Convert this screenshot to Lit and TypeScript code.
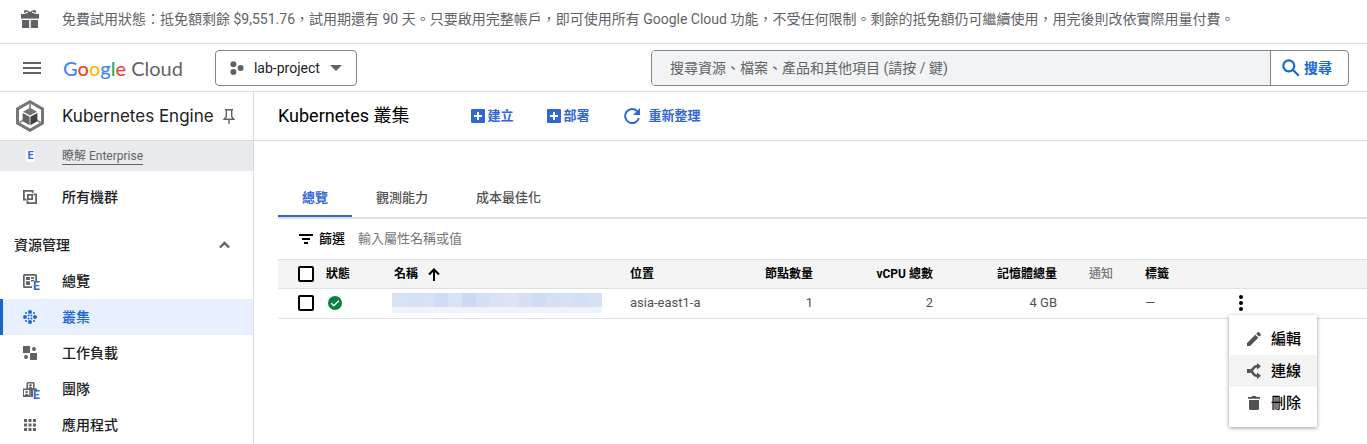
import { LitElement, html, css, svg, nothing } from "lit";
import type { TemplateResult } from "lit";
import { customElement, state } from "lit/decorators.js";
import { classMap } from "lit/directives/class-map.js";

interface NavItem {
  label: string;
  icon: string;
  badge?: boolean;
}

const icons: Record<string, TemplateResult> = {
  gift: svg`<g fill="#5f6368"><path d="M0 4h18v4.600H0z"/><path d="M1 10h7.200v8H1zM9.800 10H17v8H9.800z"/><path d="M3 .5C5 0 7 .4 8 1.400h2C11 .4 13 0 15 .5V2.500L12.500 4h-7L3 2.500z"/></g><path d="M4.500 2.400h2.500M11 2.400h2.500" stroke="#fff" stroke-width="1"/>`,
  menu: svg`<path d="M0 1h18M0 6h18M0 11h18" stroke="#5f6368" stroke-width="2"/>`,
  project: svg`<g fill="#5f6368"><circle cx="3.400" cy="3.200" r="3"/><circle cx="10.600" cy="7" r="3"/><circle cx="3.400" cy="10.900" r="3"/></g>`,
  caret: svg`<path d="M0 0h12L6 6z" fill="#5f6368"/>`,
  search: svg`<g fill="none" stroke="#1967d2" stroke-width="2.200"><circle cx="6.800" cy="6.800" r="5.500"/><path d="M10.800 10.800l6 6"/></g>`,
  gke: svg`<path d="M14 1.700L26.500 8.900v14.200L14 30.300 1.500 23.100V8.900z" fill="none" stroke="#757575" stroke-width="3"/><path d="M14 3v6M3.500 22.500l5-3M24.500 22.500l-5-3" stroke="#8a8a8a" stroke-width="1.800"/><path d="M14 7.800l7 3.900-7 3.900-7-3.900z" fill="#757575"/><path d="M6.600 12.900l7 3.900v8.400l-7-4z" fill="#616161"/><path d="M21.400 12.900l-7 3.900v8.400l7-4z" fill="#424242"/>`,
  pin: svg`<g fill="none" stroke="#5f6368" stroke-width="1.400"><path d="M2 .8h8M3.300.8v7L1.200 10.200h9.600L8.700 7.800v-7M6 10v5"/></g>`,
  fleet: svg`<g fill="none" stroke="#5f6368" stroke-width="1.800"><path d="M3.500 9.600H.9V.9h8.700v2M10.500 4.400h2.600v8.700H4.400v-2.500"/><path d="M4.800 4.800h4.400v4.400H4.800z"/></g>`,
  overview: svg`<path d="M14 7V1.500Q14 0 12.500 0h-11Q0 0 0 1.500v11Q0 14 1.500 14H9v-1.700H1.700V1.700h10.600V7z" fill="#5f6368"/><path d="M3 3h4v3H3zM8 3h3.200v1.800H8zM3 7.200h4v3.800H3zM8 6h3.200v1.500H8z" fill="#5f6368"/>`,
  clusters: svg`<g fill="#1967d2"><circle cx="7" cy="2" r="2"/><circle cx="7" cy="12" r="2"/><circle cx="2" cy="7" r="2"/><circle cx="12" cy="7" r="2"/><circle cx="5.600" cy="5.600" r="1"/><circle cx="8.400" cy="5.600" r="1"/><circle cx="5.600" cy="8.400" r="1"/><circle cx="8.400" cy="8.400" r="1"/><circle cx="3" cy="3" r="1"/><circle cx="11" cy="3" r="1"/><circle cx="3" cy="11" r="1"/><circle cx="11" cy="11" r="1"/></g>`,
  workloads: svg`<g fill="#5f6368"><path d="M0 0h7v7H0zM7 7h7v7H7z"/><circle cx="11" cy="3" r="2"/><circle cx="3" cy="11" r="2"/></g>`,
  teams: svg`<g fill="none" stroke="#5f6368" stroke-width="1.500"><path d="M4.200 7V1.500Q4.200.8 5 .8h5q.8 0 .8.700V7M-.2 7.200h14.400M.2 7v7.200h6.800V7"/></g><g fill="#5f6368"><circle cx="7.500" cy="3.200" r="1.200"/><path d="M5 7q2.500-4.500 5 0z"/><circle cx="3.600" cy="10" r="1.200"/><path d="M1 14q2.600-4.500 5.200 0zM8 7h2v8H8z"/></g>`,
  apps: svg`<path d="M1 1h3v3H1zM5.500 1h3v3h-3zM10 1h3v3h-3zM1 5.500h3v3H1zM5.500 5.500h3v3h-3zM10 5.500h3v3h-3zM1 10h3v3H1zM5.500 10h3v3h-3zM10 10h3v3h-3z" fill="#5f6368"/>`,
  collapse: svg`<path d="M1 6.500l4.500-4.500L10 6.500" fill="none" stroke="#5f6368" stroke-width="2.400"/>`,
  add: svg`<rect width="14" height="14" rx="1" fill="#3367d6"/><path d="M7 3v8M3 7h8" stroke="#fff" stroke-width="2"/>`,
  refresh: svg`<path d="M13.200 3.200A7 7 0 1 0 14.900 10" fill="none" stroke="#3367d6" stroke-width="2"/><path d="M16 0v7H9z" fill="#3367d6"/>`,
  filter: svg`<path d="M0 1h14M3 5h8M5 9h4" stroke="#000" stroke-width="2"/>`,
  up: svg`<path d="M6 13V2M1 6.500l5-5 5 5" fill="none" stroke="#000" stroke-width="2"/>`,
  ok: svg`<circle cx="7" cy="7" r="7" fill="#0b8043"/><path d="M3.300 7.200l2.500 2.500 5-5" fill="none" stroke="#fff" stroke-width="1.500"/>`,
  more: svg`<circle cx="2" cy="2" r="2"/><circle cx="2" cy="8" r="2"/><circle cx="2" cy="14" r="2"/>`,
  edit: svg`<path d="M0 11v3h3l8.300-8.300-3-3zM13.700 3.300a.8.800 0 0 0 0-1.200L11.900.3a.8.800 0 0 0-1.200 0L9.200 1.800l3 3z" fill="#525252"/>`,
  connect: svg`<path d="M0 8h4M10.500 3.200H9.500Q8 3.200 6.800 4.800L4.300 8l2.500 3.200Q8 12.800 9.500 12.800h1" fill="none" stroke="#525252" stroke-width="2.600"/><path d="M0 6h3.500v4H0zM10 0l4 3.200-4 3.200zM10 9.600l4 3.200-4 3.200z" fill="#525252"/>`,
  remove: svg`<path d="M1 4h10v8.500Q11 14 9.500 14h-7Q1 14 1 12.500zM0 1h3.500L4 0h4l.5 1H12v1.700H0z" fill="#525252"/>`,
};

const icon = (name: string, w: number, h: number) =>
  html`<svg width=${w} height=${h} viewBox="0 0 ${w} ${h}" aria-hidden="true">${icons[name]}</svg>`;

const mosaic = ["#d8e2f6", "#d6e1f5", "#d7e2f7", "#d0dcf5", "#d8e3f7", "#cdd8f3", "#d5e0f6", "#d8e3f7", "#dfe3f6", "#d6e0f5", "#d1dcf4", "#d5e0f5", "#d6e1f5", "#d4dff5", "#d6e1f6"];

@customElement("app-root")
export class AppRoot extends LitElement {
  @state() private sectionOpen = true;
  @state() private menuOpen = true;
  @state() private tab = 0;

  private nav: NavItem[] = [
    { label: "總覽", icon: "overview", badge: true },
    { label: "叢集", icon: "clusters" },
    { label: "工作負載", icon: "workloads" },
    { label: "團隊", icon: "teams", badge: true },
    { label: "應用程式", icon: "apps" },
  ];
  private tabs = ["總覽", "觀測能力", "成本最佳化"];

  static styles = css`
    :host {
      display: flex;
      flex-direction: column;
      min-height: 100vh;
      box-sizing: border-box;
      background: #fff;
      color: #202124;
      font: 14px/20px Roboto, "Noto Sans CJK TC", sans-serif;
    }
    * { box-sizing: border-box; }
    svg { display: block; flex: none; }
    button {
      font: inherit;
      color: inherit;
      background: none;
      border: 0;
      padding: 0;
      margin: 0;
      cursor: pointer;
      display: flex;
      align-items: center;
    }
    a { color: inherit; text-decoration: none; }
    input { font: inherit; color: inherit; border: 0; margin: 0; outline: 0; min-width: 0; }
    .banner {
      display: flex;
      align-items: center;
      gap: 23px;
      min-height: 44px;
      padding: 0 21px 6px;
      border-bottom: 1px solid #dadce0;
      color: #5f6368;
    }
    .banner p { margin: 0; }
    .topbar {
      display: flex;
      align-items: center;
      height: 48px;
      padding: 0 18px 0 23px;
      border-bottom: 1px solid #dadce0;
    }
    .logo {
      min-width: 118px;
      margin: 0 32px 0 22px;
      font: 20px/24px Lato, sans-serif;
      color: #5f6368;
      white-space: nowrap;
    }
    .logo b { font-weight: 500; }
    .blue { color: #4285f4; }
    .red { color: #ea4335; }
    .yellow { color: #fbbc04; }
    .green { color: #34a853; }
    .project {
      height: 36px;
      padding: 0 14px;
      gap: 10px;
      border: 1px solid #80868b;
      border-radius: 4px;
      white-space: nowrap;
    }
    .search {
      display: flex;
      flex: 0 1 698px;
      height: 36px;
      margin-left: auto;
      border: 1px solid #80868b;
      border-radius: 4px;
      overflow: hidden;
    }
    .search input { flex: 1; padding: 0 18px; background: #f1f3f4; }
    .search input::placeholder { color: #5f6368; opacity: 1; }
    .search button {
      width: 78px;
      gap: 4px;
      padding-left: 11px;
      border-left: 1px solid #80868b;
      color: #1967d2;
      font-weight: 700;
    }
    .body { display: flex; flex: 1; }
    aside { flex: 0 0 254px; border-right: 1px solid #dadce0; }
    .product {
      display: flex;
      align-items: center;
      height: 49px;
      padding-left: 16px;
      border-bottom: 1px solid #dadce0;
    }
    .product h2 {
      min-width: 153px;
      margin: 0 8px 0 18px;
      font: 17px/24px Inter, sans-serif;
      white-space: nowrap;
    }
    .learn {
      display: flex;
      align-items: center;
      height: 30px;
      padding-left: 26px;
      gap: 27px;
      background: #e8eaed;
      color: #5f6368;
      font-size: 12px;
      line-height: 16px;
    }
    .learn a { border-bottom: 1px solid #5f6368; }
    .tile {
      width: 9px;
      border-radius: 2px;
      background: #fff;
      text-align: center;
      line-height: 12px;
      font-size: 11px;
    }
    .e { color: #3367d6; font-weight: 700; }
    .item {
      display: flex;
      align-items: center;
      height: 36px;
      padding-left: 20px;
      gap: 25px;
      border-left: 3px solid transparent;
      font-weight: 500;
    }
    .item .glyph { position: relative; width: 14px; display: flex; justify-content: center; }
    .glyph .e {
      position: absolute;
      right: -3px;
      bottom: -3px;
      width: 7px;
      background: #fff;
      font-size: 12px;
      line-height: 10px;
    }
    .item.active { background: #e8f0fe; border-color: #1967d2; color: #1967d2; }
    .standalone { margin-top: 8px; }
    .section {
      width: 100%;
      height: 24px;
      margin: 18px 0 6px;
      padding: 0 23px 0 14px;
      justify-content: space-between;
      font-weight: 500;
    }
    main { flex: 1; min-width: 0; color: #000; }
    .toolbar {
      display: flex;
      align-items: center;
      height: 49px;
      padding-left: 24px;
      border-bottom: 1px solid #dadce0;
    }
    h1 { margin: 0 62px 0 0; font-size: 18px; line-height: 24px; font-weight: 400; white-space: nowrap; }
    .actions { display: flex; gap: 34px; color: #3367d6; font-size: 13px; font-weight: 700; white-space: nowrap; }
    .actions button { gap: 2px; }
    .actions .wide { gap: 8px; padding-left: 1px; }
    .content { padding: 38px 0 0 24px; }
    .tabs { display: flex; border-bottom: 2px solid #e0e0e0; font-size: 13px; font-weight: 500; color: #525252; }
    .tab { height: 38px; padding: 2px 24px 0; border-bottom: 2px solid transparent; }
    .tab.on { color: #3367d6; border-color: #3367d6; font-weight: 700; }
    .filter { display: flex; align-items: center; height: 40px; padding-left: 21px; font-size: 13px; }
    .filter label { display: flex; align-items: center; gap: 6px; font-weight: 500; }
    .filter input { flex: 1; padding: 0 13px; }
    .filter input::placeholder { color: #757575; opacity: 1; }
    table { width: 100%; table-layout: fixed; border-collapse: collapse; font-size: 13px; line-height: 20px; }
    th { height: 29px; padding: 0; font-size: 12px; font-weight: 700; text-align: left; background: #f4f4f4; border: solid #e0e0e0; border-width: 1px 0; white-space: nowrap; }
    td { height: 30px; padding: 0 0 2px; color: #525252; border-bottom: 1px solid #e0e0e0; }
    .num { text-align: right; }
    .muted { padding-left: 32px; color: #757575; font-weight: 500; }
    .sort { gap: 10px; }
    .c-check { width: 48px; }
    .c-status { width: 68px; }
    .c-name { width: 236px; }
    .c-loc { width: 100px; }
    .c-nodes { width: 83px; }
    .c-cpu { width: 120px; }
    .c-mem { width: 124px; }
    .c-note { width: 88px; }
    .c-tag { width: 84px; }
    .redacted { margin-left: -2px; }
    input[type="checkbox"] {
      appearance: none;
      display: block;
      width: 16px;
      height: 16px;
      margin-left: 20px;
      border: 2px solid #000;
      border-radius: 2px;
      background: #fff;
    }
    .row-menu { position: relative; }
    .row-menu > button { width: 24px; height: 24px; justify-content: center; }
    .menu {
      position: absolute;
      top: 100%;
      left: 0;
      z-index: 1;
      padding: 8px 0;
      background: #fff;
      color: #000;
      box-shadow: 0 1px 4px rgba(0, 0, 0, 0.4);
    }
    .menu button { width: 88px; height: 32px; padding-left: 18px; gap: 10px; font-size: 15px; font-weight: 500; }
    .menu button.hover, .menu button:hover { background: #f4f4f4; }
    .menu .glyph { display: flex; width: 14px; justify-content: center; }
  `;

  private renderItem(item: NavItem) {
    const active = item.icon === "clusters";
    const w = 14;
    const h = item.icon === "teams" ? 15 : 14;
    return html`<a href="#" class=${classMap({ item: true, active })} aria-current=${active ? "page" : nothing}>
      <span class="glyph">${icon(item.icon, w, h)}${item.badge ? html`<span class="e">E</span>` : nothing}</span>
      ${item.label}
    </a>`;
  }

  render() {
    return html`
      <div class="banner">
        ${icon("gift", 18, 18)}
        <p>免費試用狀態：抵免額剩餘 $9,551.76，試用期還有 90 天。只要啟用完整帳戶，即可使用所有 Google Cloud 功能，不受任何限制。剩餘的抵免額仍可繼續使用，用完後則改依實際用量付費。</p>
      </div>
      <header class="topbar">
        <button aria-label="選單">${icon("menu", 18, 12)}</button>
        <a class="logo" href="#"><b><span class="blue">G</span><span class="red">o</span><span class="yellow">o</span><span class="blue">g</span><span class="green">l</span><span class="red">e</span></b> Cloud</a>
        <button class="project">${icon("project", 14, 14)}lab-project${icon("caret", 12, 6)}</button>
        <form class="search" role="search" @submit=${(e: Event) => e.preventDefault()}>
          <input type="text" aria-label="搜尋" placeholder="搜尋資源、檔案、產品和其他項目 (請按 / 鍵)" />
          <button>${icon("search", 18, 18)}搜尋</button>
        </form>
      </header>
      <div class="body">
        <aside>
          <div class="product">
            ${icon("gke", 28, 32)}
            <h2>Kubernetes Engine</h2>
            <button aria-label="固定">${icon("pin", 12, 15)}</button>
          </div>
          <div class="learn"><span class="tile e">E</span><a href="#">瞭解 Enterprise</a></div>
          <nav>
            <a class="item standalone" href="#"><span class="glyph">${icon("fleet", 14, 14)}</span>所有機群</a>
            <button class="section" aria-expanded=${this.sectionOpen} @click=${() => (this.sectionOpen = !this.sectionOpen)}>
              資源管理 ${icon("collapse", 11, 8)}
            </button>
            ${this.sectionOpen ? this.nav.map((n) => this.renderItem(n)) : nothing}
          </nav>
        </aside>
        <main>
          <div class="toolbar">
            <h1>Kubernetes 叢集</h1>
            <div class="actions">
              <button>${icon("add", 14, 14)}建立</button>
              <button>${icon("add", 14, 14)}部署</button>
              <button class="wide">${icon("refresh", 16, 16)}重新整理</button>
            </div>
          </div>
          <div class="content">
            <div class="tabs" role="tablist">
              ${this.tabs.map((t, i) => html`<button role="tab" aria-selected=${this.tab === i} class=${classMap({ tab: true, on: this.tab === i })} @click=${() => (this.tab = i)}>${t}</button>`)}
            </div>
            <div class="filter">
              <label for="filter">${icon("filter", 14, 10)}篩選</label>
              <input id="filter" type="text" placeholder="輸入屬性名稱或值" />
            </div>
            <table>
              <colgroup>
                <col class="c-check" /><col class="c-status" /><col class="c-name" /><col class="c-loc" /><col class="c-nodes" /><col class="c-cpu" /><col class="c-mem" /><col class="c-note" /><col class="c-tag" /><col />
              </colgroup>
              <thead>
                <tr>
                  <th><input type="checkbox" aria-label="全選" /></th>
                  <th>狀態</th>
                  <th><button class="sort">名稱${icon("up", 12, 13)}</button></th>
                  <th>位置</th>
                  <th class="num">節點數量</th>
                  <th class="num">vCPU 總數</th>
                  <th class="num">記憶體總量</th>
                  <th class="muted">通知</th>
                  <th>標籤</th>
                  <th></th>
                </tr>
              </thead>
              <tbody>
                <tr>
                  <td><input type="checkbox" aria-label="選取" /></td>
                  <td><svg width="18" height="14" viewBox="-2 0 18 14" role="img">${icons.ok}</svg></td>
                  <td>
                    <svg class="redacted" width="210" height="20" viewBox="0 0 210 20" aria-hidden="true">
                      ${mosaic.map((c, i) => svg`<rect x=${i * 14} y="0" width="14" height="14" fill=${c}/>`)}
                      <rect x="0" y="14" width="210" height="6" fill="#eff3fc"/>
                    </svg>
                  </td>
                  <td>asia-east1-a</td>
                  <td class="num">1</td>
                  <td class="num">2</td>
                  <td class="num">4 GB</td>
                  <td></td>
                  <td>—</td>
                  <td>
                    <div class="row-menu">
                      <button aria-label="動作" aria-expanded=${this.menuOpen} @click=${() => (this.menuOpen = !this.menuOpen)}>${icon("more", 4, 16)}</button>
                      ${this.menuOpen
                        ? html`<div class="menu" role="menu">
                            <button role="menuitem"><span class="glyph">${icon("edit", 14, 14)}</span>編輯</button>
                            <button role="menuitem" class="hover"><span class="glyph">${icon("connect", 14, 16)}</span>連線</button>
                            <button role="menuitem"><span class="glyph">${icon("remove", 12, 14)}</span>刪除</button>
                          </div>`
                        : nothing}
                    </div>
                  </td>
                </tr>
              </tbody>
            </table>
          </div>
        </main>
      </div>
    `;
  }
}
